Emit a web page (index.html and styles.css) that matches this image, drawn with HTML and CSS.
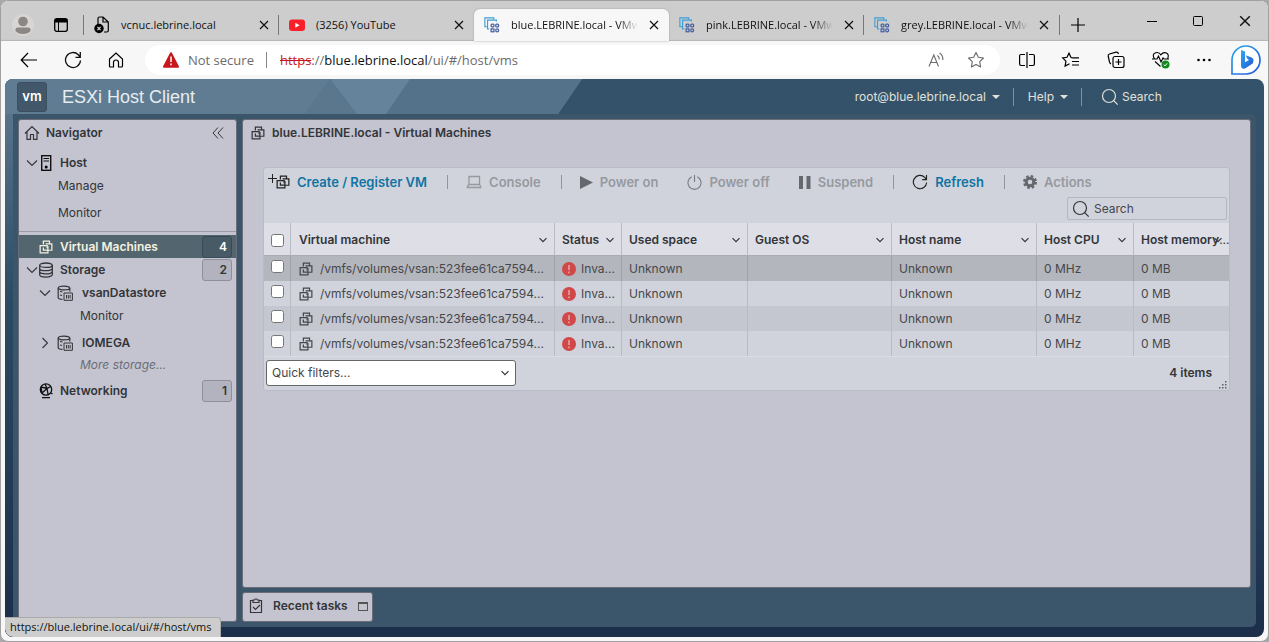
FILE: index.html
```html
<!DOCTYPE html>
<html lang="en">
<head>
<meta charset="utf-8">
<title>blue.LEBRINE.local - VMware ESXi</title>
<link rel="stylesheet" href="styles.css">
</head>
<body>
<svg class="sprite" aria-hidden="true">
  <symbol id="close" viewBox="0 0 10 10"><path d="M1 1l8 8M9 1l-8 8" fill="none" stroke="currentColor" stroke-width="1.2"/></symbol>
  <symbol id="site" viewBox="0 0 18 18"><g fill="none" stroke="#3d9fd8" stroke-width="1.3"><path d="M4 11H1V1h10v2"/><path d="M6 13.500H4V3.500h10V5"/></g><g fill="none" stroke="#4560a0" stroke-width="1.400"><rect x="8" y="8" width="3.200" height="3.200" rx="1"/><rect x="13.200" y="8" width="3.200" height="3.200" rx="1"/><rect x="8" y="13.400" width="3.200" height="3.200"/><rect x="13.200" y="13.400" width="3.200" height="3.200" rx="1.500"/></g></symbol>
  <symbol id="vm" viewBox="0 0 16 16"><g fill="none" stroke="currentColor" stroke-width="1.400"><path d="M5 5V1.300h7v3M7.500 4.300h7.200v7.400H10"/><path d="M4.500 6.300H1.300v8.400h8.900v-3M4.500 6.300h4.800v3"/><path d="M5 8.500v3h5.200V6.800"/></g></symbol>
  <symbol id="down" viewBox="0 0 12 12"><path d="M1 3.500l5 5 5-5" fill="none" stroke="currentColor" stroke-width="1.100"/></symbol>
  <symbol id="chevron" viewBox="0 0 8 8"><path d="M.5 2.200L4 5.700l3.500-3.500" fill="none" stroke="currentColor" stroke-width="1.200"/></symbol>
  <symbol id="right" viewBox="0 0 12 12"><path d="M3.500 1l5 5-5 5" fill="none" stroke="currentColor" stroke-width="1.100"/></symbol>
  <symbol id="store" viewBox="0 0 16 16"><g fill="none" stroke="currentColor" stroke-width="1.300"><ellipse cx="8" cy="3.200" rx="6.300" ry="2.200"/><path d="M1.700 3.200v9.600c0 3 12.600 3 12.600 0V3.200M1.700 6.400c0 3 12.600 3 12.600 0M1.700 9.600c0 3 12.600 3 12.600 0"/></g></symbol>
  <symbol id="datastore" viewBox="0 0 16 16"><g fill="none" stroke="currentColor" stroke-width="1.200"><ellipse cx="7" cy="3" rx="5.800" ry="1.900"/><path d="M1.200 3v9.400c0 1 2 1.800 4.300 2M12.800 3v3.500M3 6.500l2.500.5M3 10l2 .5"/><path d="M7 8h8.400v7.300H7zM9.500 10v3.500M11.300 10v3.500M13.100 10v3.500" stroke-width="1"/></g></symbol>
  <symbol id="search" viewBox="0 0 18 18"><g fill="none" stroke="currentColor" stroke-width="1.200"><circle cx="8" cy="8" r="6.500"/><path d="M12.700 12.700l4 4"/></g></symbol>
  <symbol id="house" viewBox="0 0 16 16"><path d="M1 8.500l7-7 7 7M3 7v7.400h3.500V9.500h3v4.900H13V7" fill="none" stroke="currentColor" stroke-width="1.200"/></symbol>
  <symbol id="reload" viewBox="0 0 18 18"><path d="M16.500 9.500A7.500 7.500 0 1 1 14.300 3.700L16.300 6M16.300 1v5.300H11.500" fill="none" stroke="currentColor" stroke-width="1.300"/></symbol>
  <symbol id="alert" viewBox="0 0 14 14"><circle cx="7" cy="7" r="7" fill="#d04848"/><path d="M7 3v5M7 9.500v1.800" stroke="#e0a9ad" stroke-width="1.500"/></symbol>
</svg>
<div class="window">
  <nav class="tabs" aria-label="Browser tabs">
    <button class="avatar" aria-label="Profile"><svg width="22" height="22" viewBox="0 0 22 22"><circle cx="11" cy="11" r="11" fill="#d8d5d2"/><circle cx="11" cy="7.500" r="4.800" fill="#8b8784"/><path d="M3.500 17v-1.500q0-2 2.500-2h10q2.500 0 2.500 2V17c-3 4-12 4-15 0z" fill="#8b8784"/></svg></button>
    <button class="spaces" aria-label="Tab actions"><svg width="14" height="14" viewBox="0 0 14 14"><rect x=".7" y=".7" width="12.600" height="12.600" rx="2" fill="none" stroke="#000" stroke-width="1.300"/><path d="M1 1h12v3.500H1z"/><path d="M4.500 4v9" stroke="#000"/></svg></button>
    <div class="tab"><svg width="16" height="18" viewBox="0 0 16 18"><path d="M4 8V2.500q0-1.500 1.500-1.500H9l5.300 5v8.500q0 1.500-1.500 1.500H10M9 1v5h5" fill="none" stroke="#000" stroke-width="1.200"/><circle cx="5" cy="12.500" r="4.700"/><path d="M3.400 10.900l3.200 3.200M6.600 10.900l-3.200 3.200" stroke="#ddd" stroke-width="1.200"/></svg><span>vcnuc.lebrine.local</span><button aria-label="Close tab"><svg width="10" height="10"><use href="#close"/></svg></button></div>
    <div class="tab"><svg width="16" height="18" viewBox="0 0 16 18"><rect y="3.500" width="16" height="11.500" rx="3" fill="#f8202a"/><path d="M6.300 6.700l4.300 2.500-4.300 2.500z" fill="#fff"/></svg><span>(3256) YouTube</span><button aria-label="Close tab"><svg width="10" height="10"><use href="#close"/></svg></button></div>
    <div class="tab active"><svg width="16" height="18"><use href="#site"/></svg><span class="fade">blue.LEBRINE.local - VMw</span><button aria-label="Close tab"><svg width="10" height="10"><use href="#close"/></svg></button></div>
    <div class="tab bare"><svg width="16" height="18"><use href="#site"/></svg><span class="fade">pink.LEBRINE.local - VMw</span><button aria-label="Close tab"><svg width="10" height="10"><use href="#close"/></svg></button></div>
    <div class="tab"><svg width="16" height="18"><use href="#site"/></svg><span class="fade">grey.LEBRINE.local - VMw</span><button aria-label="Close tab"><svg width="10" height="10"><use href="#close"/></svg></button></div>
    <button class="new-tab" aria-label="New tab"><svg width="14" height="14" viewBox="0 0 14 14"><path d="M7 0v14M0 7h14" stroke="#000" stroke-width="1.200"/></svg></button>
    <div class="window-buttons">
      <button aria-label="Minimize"><svg width="10" height="10"><path d="M0 5.500h10" stroke="#000"/></svg></button>
      <button aria-label="Maximize"><svg width="10" height="10"><rect x=".5" y=".5" width="9" height="9" rx="1" fill="none" stroke="#000"/></svg></button>
      <button aria-label="Close window"><svg width="12" height="12"><use href="#close"/></svg></button>
    </div>
  </nav>
  <div class="toolbar">
    <button aria-label="Back"><svg width="18" height="16" viewBox="0 0 18 16"><path d="M17 8H1.500M8 1L1.200 8 8 15" fill="none" stroke="#000" stroke-width="1.200"/></svg></button>
    <button aria-label="Reload"><svg width="18" height="18"><use href="#reload"/></svg></button>
    <button aria-label="Home"><svg width="16" height="16" viewBox="0 0 16 16"><path d="M1.500 7L8 1l6.500 6v7q0 1-1 1H10.500v-4.500a2.500 2.500 0 0 0-5 0V15H2.500q-1 0-1-1z" fill="none" stroke="#000" stroke-width="1.200"/></svg></button>
    <div class="address">
      <svg width="16" height="16" viewBox="0 0 16 16"><path d="M8 1.200L15 14.800H1z" fill="#c8171d" stroke="#c8171d" stroke-width="2" stroke-linejoin="round"/><path d="M8 4.500v5.500M8 11.500v1.800" stroke="#fff" stroke-width="1.500"/></svg>
      <span class="insecure">Not secure</span>
      <div class="url" role="textbox" aria-label="Address" contenteditable="true" spellcheck="false"><s>https</s>://<b>blue.lebrine.local</b>/ui/#/host/vms</div>
      <button aria-label="Read aloud"><svg width="16" height="16" viewBox="0 0 16 16"><g fill="none" stroke="#6b6b6b" stroke-width="1.100"><path d="M1 14.500L5.800 3l4.700 11.500M2.700 10.500h6.200M9.500 3.500q2 1.500 1.700 4M11.500 1q3.800 2.500 3.300 7"/></g></svg></button>
      <button aria-label="Favorite"><svg width="18" height="18" viewBox="0 0 18 18"><path d="M9 1.500l2.300 4.800 5.200.7-3.800 3.700.9 5.300L9 13.500 4.400 16l.9-5.300L1.500 7l5.200-.7z" fill="none" stroke="#666" stroke-width="1.100" stroke-linejoin="round"/></svg></button>
    </div>
    <div class="tools">
      <button aria-label="Split screen"><svg width="16" height="16" viewBox="0 0 16 16"><path d="M6 2.500H2q-1.400 0-1.400 1.400v8.200q0 1.400 1.400 1.400h4M10 2.500h4q1.400 0 1.400 1.400v8.200q0 1.400-1.400 1.400h-4M8 0v16" fill="none" stroke="#000" stroke-width="1.200"/></svg></button>
      <button aria-label="Favorites"><svg width="18" height="16" viewBox="0 0 18 16"><path d="M10.500 5.800L9 5.500 7 1.200 5 5.300l-4.300.6 3.200 3.200-.8 5L7.500 11.700M10.500 5.800h6.500M10 9.500h7M10 13h7" fill="none" stroke="#000" stroke-width="1.200"/></svg></button>
      <button aria-label="Collections"><svg width="18" height="18" viewBox="0 0 18 18"><rect x="6" y="5.500" width="11" height="11" rx="2" fill="none" stroke="#000" stroke-width="1.200"/><path d="M4 13q-1-.5-1.500-2L1.200 5q-.3-1.500 1.300-2L9 1.200q2-.3 2.500 1.800M11.500 8v6M8.500 11h6" fill="none" stroke="#000" stroke-width="1.200"/></svg></button>
      <button aria-label="Browser essentials"><svg width="18" height="18" viewBox="0 0 18 18"><path d="M2.500 8Q-.5 3 3.700 1.700 7 .8 8.800 3.800q2.400-3 5.600-1.900Q17.500 3.500 15.500 8M0 8h5l1.500-3 2.500 6 2-4 1 1h5M3 10.500L8.500 15.500" fill="none" stroke="#000" stroke-width="1.100"/><circle cx="13.500" cy="13.500" r="4" fill="#138a1e"/><path d="M11.700 13.600l1.300 1.300 2.200-2.600" fill="none" stroke="#fff"/></svg></button>
      <button aria-label="More"><svg width="14" height="4"><circle cx="1.500" cy="2" r="1.300"/><circle cx="7" cy="2" r="1.300"/><circle cx="12.500" cy="2" r="1.300"/></svg></button>
      <button class="bing" aria-label="Bing"><svg width="30" height="30" viewBox="0 0 30 30"><defs><linearGradient id="bb" x2="1" y2="1"><stop stop-color="#2ea8ee"/><stop offset="1" stop-color="#2558d6"/></linearGradient></defs><path d="M1 29V15A14 14 0 1 1 15 29z" fill="#fff" stroke="url(#bb)" stroke-width="1.700"/><path d="M10 5l4 1.500v10.800l4-2.300-1.700-1.200-1.600-3.500 6 2.300q3 1.800 1 5.800L14 23.500q-4 1-4-3z" fill="url(#bb)"/></svg></button>
    </div>
  </div>
  <div class="app">
    <header class="masthead">
      <svg class="facets" width="580" height="35" viewBox="0 0 580 35" aria-hidden="true"><path d="M0 0h577l-24 35H0z" fill="#5f7c93"/><path d="M325 0h252l-24 35H300z" fill="#54728a"/><path d="M325 0l-25 35h52z" fill="#5a778e"/><path d="M325 0h80l-24 35h-29z" fill="#65839a"/></svg>
      <span class="logo">vm</span>
      <h1>ESXi Host Client</h1>
      <div class="user-menu">
        <button>root@blue.lebrine.local <i class="caret"></i></button>
        <button>Help <i class="caret"></i></button>
        <label class="global-search"><svg width="18" height="18"><use href="#search"/></svg><input type="text" placeholder="Search" aria-label="Search everything"></label>
      </div>
    </header>
    <div class="workspace">
      <nav class="navigator" aria-label="Navigator">
        <div class="panel-title"><svg width="16" height="16"><use href="#house"/></svg><span>Navigator</span><button aria-label="Collapse"><svg width="12" height="12" viewBox="0 0 12 12"><path d="M6 .5L1 6l5 5.500M11 .5L6 6l5 5.500" fill="none" stroke="currentColor"/></svg></button></div>
        <ul class="tree host">
          <li><svg class="twist" width="12" height="12"><use href="#down"/></svg><svg class="glyph" width="16" height="16" viewBox="0 0 16 16"><rect x="3.700" y=".7" width="9" height="14.600" fill="none" stroke="#111" stroke-width="1.400"/><path d="M5.500 3.500h5.500M5.500 6h5.500" stroke="#111"/><circle cx="8.200" cy="12" r="1.500"/></svg><a href="#host">Host</a></li>
          <li class="leaf"><a href="#manage">Manage</a></li>
          <li class="leaf gap"><a href="#monitor">Monitor</a></li>
        </ul>
        <ul class="tree inventory">
          <li class="selected"><span class="twist"></span><svg class="glyph" width="14" height="14"><use href="#vm"/></svg><a href="#vms">Virtual Machines</a><span class="count">4</span></li>
          <li><svg class="twist" width="12" height="12"><use href="#down"/></svg><svg class="glyph" width="16" height="16"><use href="#store"/></svg><a href="#storage">Storage</a><span class="count">2</span></li>
          <li class="nested"><svg class="twist" width="12" height="12"><use href="#down"/></svg><svg class="glyph" width="16" height="16"><use href="#datastore"/></svg><a href="#vsan">vsanDatastore</a></li>
          <li class="leaf deep"><a href="#vsan-monitor">Monitor</a></li>
          <li class="nested gap"><svg class="twist" width="12" height="12"><use href="#right"/></svg><svg class="glyph" width="16" height="16"><use href="#datastore"/></svg><a href="#iomega">IOMEGA</a></li>
          <li class="leaf deep more"><a href="#more">More storage...</a></li>
          <li class="gap"><span class="twist"></span><svg class="glyph" width="16" height="16" viewBox="0 0 16 16"><g fill="none" stroke="#111" stroke-width="1.300"><circle cx="8" cy="6.500" r="5.700"/><path d="M3 4l6 1.500 3.500-2M4 10l5-4.500 1 5.500M3 4l1 6M9 5.500L7 1M4 14.700h8M13 10l1.500 1"/></g></svg><a href="#networking">Networking</a><span class="count">1</span></li>
        </ul>
      </nav>
      <main class="main-column">
        <section class="panel">
          <h2><svg width="14" height="14"><use href="#vm"/></svg>blue.LEBRINE.local - Virtual Machines</h2>
          <div class="grid-box">
            <div class="actions">
              <button class="live"><svg width="22" height="16" viewBox="0 0 22 16"><path d="M0 4.500h9M4.500 0v9" stroke="#222"/><g transform="translate(8 1)" color="#222"><use href="#vm" width="14" height="14"/></g></svg>Create / Register VM</button>
              <button class="split" disabled><svg width="16" height="14" viewBox="0 0 16 14"><path d="M3 1.500h10.500v8H3zM.7 12.500h14.600M3 9.500L1 12M13.500 9.500l1.500 2.500" fill="none" stroke="currentColor" stroke-width="1.300"/></svg>Console</button>
              <button class="split" disabled><svg width="13" height="13" viewBox="0 0 13 13"><path d="M0 0l13 6.500L0 13z" fill="#66686e"/></svg>Power on</button>
              <button disabled><svg width="15" height="15" viewBox="0 0 15 15"><path d="M4.700 1.800a6.600 6.600 0 1 0 5.600 0M7.500 0v7" fill="none" stroke="#777980" stroke-width="1.100"/></svg>Power off</button>
              <button disabled><svg width="12" height="13" viewBox="0 0 12 13"><path d="M0 0h4v13H0zM7.500 0h4v13h-4z" fill="#66686e"/></svg>Suspend</button>
              <button class="live split"><svg width="16" height="16" color="#222"><use href="#reload"/></svg>Refresh</button>
              <button class="split" disabled><svg width="14" height="14" viewBox="0 0 14 14"><circle cx="7" cy="7" r="3.800" fill="none" stroke="#66686e" stroke-width="3"/><circle cx="7" cy="7" r="5.900" fill="none" stroke="#66686e" stroke-width="2.200" stroke-dasharray="2.600 2.034"/></svg>Actions</button>
            </div>
            <div class="filter-row"><label><svg width="18" height="18"><use href="#search"/></svg><input type="text" placeholder="Search" aria-label="Search virtual machines"></label></div>
            <table>
              <colgroup><col class="c-check"><col><col class="c-status"><col class="c-space"><col class="c-os"><col class="c-host"><col class="c-cpu"><col class="c-memory"></colgroup>
              <thead><tr>
                <th><input type="checkbox" aria-label="Select all"></th>
                <th>Virtual machine<svg width="8" height="8"><use href="#chevron"/></svg></th>
                <th>Status<svg width="8" height="8"><use href="#chevron"/></svg></th>
                <th>Used space<svg width="8" height="8"><use href="#chevron"/></svg></th>
                <th>Guest OS<svg width="8" height="8"><use href="#chevron"/></svg></th>
                <th>Host name<svg width="8" height="8"><use href="#chevron"/></svg></th>
                <th>Host CPU<svg width="8" height="8"><use href="#chevron"/></svg></th>
                <th class="tight">Host memory<span>...</span><svg width="8" height="8"><use href="#chevron"/></svg></th>
              </tr></thead>
              <tbody>
                <tr><td><input type="checkbox" aria-label="Select row 1"></td><td><div class="name"><svg width="14" height="14"><use href="#vm"/></svg><span>/vmfs/volumes/vsan:523fee61ca7594...</span></div></td><td><div class="state"><svg width="14" height="14"><use href="#alert"/></svg>Inva...</div></td><td>Unknown</td><td></td><td>Unknown</td><td>0 MHz</td><td>0 MB</td></tr>
                <tr><td><input type="checkbox" aria-label="Select row 2"></td><td><div class="name"><svg width="14" height="14"><use href="#vm"/></svg><span>/vmfs/volumes/vsan:523fee61ca7594...</span></div></td><td><div class="state"><svg width="14" height="14"><use href="#alert"/></svg>Inva...</div></td><td>Unknown</td><td></td><td>Unknown</td><td>0 MHz</td><td>0 MB</td></tr>
                <tr><td><input type="checkbox" aria-label="Select row 3"></td><td><div class="name"><svg width="14" height="14"><use href="#vm"/></svg><span>/vmfs/volumes/vsan:523fee61ca7594...</span></div></td><td><div class="state"><svg width="14" height="14"><use href="#alert"/></svg>Inva...</div></td><td>Unknown</td><td></td><td>Unknown</td><td>0 MHz</td><td>0 MB</td></tr>
                <tr><td><input type="checkbox" aria-label="Select row 4"></td><td><div class="name"><svg width="14" height="14"><use href="#vm"/></svg><span>/vmfs/volumes/vsan:523fee61ca7594...</span></div></td><td><div class="state"><svg width="14" height="14"><use href="#alert"/></svg>Inva...</div></td><td>Unknown</td><td></td><td>Unknown</td><td>0 MHz</td><td>0 MB</td></tr>
              </tbody>
            </table>
            <div class="grid-footer">
              <div class="quick"><select aria-label="Quick filters"><option>Quick filters...</option></select><svg width="8" height="8"><use href="#chevron"/></svg></div>
              <span class="total">4 items</span>
              <svg class="grip" width="8" height="8" viewBox="0 0 8 8"><path d="M6 0h1.500v1.500H6zM6 3h1.500v1.500H6zM3 3h1.500v1.500H3zM0 6h1.500v1.500H0zM3 6h1.500v1.500H3zM6 6h1.500v1.500H6z" fill="#5c5e66"/></svg>
            </div>
          </div>
        </section>
        <section class="tasks"><svg width="14" height="16" viewBox="0 0 14 16"><path d="M4 2.500H1.500v12h11v-12H10M4 4.500V2h1.500q1.500-2.500 3 0H10v2.500zM4 9l2.500 2.500L11 7" fill="none" stroke="currentColor" stroke-width="1.200"/></svg><span>Recent tasks</span><button aria-label="Expand"><svg width="10" height="10"><rect x=".5" y="1.500" width="9" height="8" fill="none" stroke="#555"/><path d="M0 2.500h10" stroke="#555"/></svg></button></section>
      </main>
    </div>
    <div class="link-hint">https://blue.lebrine.local/ui/#/host/vms</div>
  </div>
</div>
</body>
</html>
```
FILE: styles.css
```css
* { box-sizing: border-box; }
html { background: #a9a9a9; }
body { margin: 0; font: 12px/16px "Open Sans", "Liberation Sans", sans-serif; color: #111; }
svg { display: block; flex: none; overflow: visible; }
button { display: flex; align-items: center; justify-content: center; margin: 0; padding: 0; border: 0; background: none; font: inherit; color: inherit; white-space: nowrap; }
input { font: inherit; color: inherit; }
a { color: inherit; text-decoration: none; }
.sprite { position: absolute; width: 0; height: 0; }

.window { display: flex; flex-direction: column; min-height: 100vh; border: 1px solid #a0a0a0; border-radius: 8px; overflow: hidden; background: #f7f7f7; }

/* browser tabs */
.tabs { display: flex; height: 40px; padding: 8px 0 0 11px; background: #cdcdcd; box-shadow: inset 0 -2px 1px -1px #b5b5b5; font-size: 11px; }
.avatar { width: 22px; margin-right: 20px; }
.spaces { width: 14px; margin-right: 16px; }
.tab { display: flex; align-items: center; flex: 0 1 195px; min-width: 0; height: 32px; padding: 0 10px; gap: 11px; }
.tab::before { content: ""; flex: none; width: 1px; height: 20px; margin: 0 -1px 0 -11px; background: #777; }
.tab span { flex: 1; overflow: hidden; white-space: nowrap; }
.tab .fade { overflow: visible; min-width: 0; mask-image: linear-gradient(90deg, #000 84%, transparent); }
.tab button { width: 10px; height: 20px; }
.tab.active { background: #f7f7f7; border-radius: 6px 6px 0 0; box-shadow: 0 0 2px #999; }
.tab.active::before, .tab.bare::before { background: none; }
.new-tab { padding: 0 11px; border-left: 1px solid #777; height: 20px; margin-top: 6px; }
.window-buttons { display: flex; align-items: center; height: 24px; gap: 36px; margin-left: auto; padding-right: 17px; }

/* browser toolbar */
.toolbar { display: flex; align-items: center; height: 38px; padding: 0 7px 0 19px; gap: 26px; }
.address { display: flex; align-items: center; flex: 1; height: 30px; margin-left: -5px; padding: 0 15px 0 18px; gap: 9px; border-radius: 15px; background: #fff; font-size: 13px; color: #6b6b6b; }
.insecure { padding-right: 12px; border-right: 1px solid #888; white-space: nowrap; }
.url { flex: 1; margin-left: 4px; white-space: nowrap; outline: 0; }
.url s { color: #c8171d; }
.url b { color: #111; font-weight: 400; }
.address button + button { margin-left: 14px; }
.tools { display: flex; align-items: center; gap: 27px; margin-left: -7px; }
.tools .bing { margin-left: -7px; }

/* host client */
.app { position: relative; display: flex; flex-direction: column; flex: 1; margin: 0 4px 4px; border-radius: 8px; overflow: hidden; background: linear-gradient(#34536a, #2c4a63 55%, #1b2e4a); font-family: Inter, "Open Sans", sans-serif; color: #333538; }
.app::before { content: ""; position: absolute; left: 0; top: 0; bottom: 0; width: 8px; background: linear-gradient(#5f7c93, #2c4a63 40%, #1b2e4a); }
.masthead { position: relative; display: flex; align-items: center; height: 35px; padding: 0 100px 0 12px; color: #e6ecf0; }
.facets { position: absolute; left: 0; top: 0; }
.logo { position: relative; width: 30px; height: 30px; border-radius: 3px; background: #42586a; border: 1px solid #3a5061; font: 600 13px/27px Inter, sans-serif; text-align: center; color: #fff; }
h1 { position: relative; margin: 0 auto 0 15px; font: 400 18px/24px "Liberation Sans", Arial, sans-serif; white-space: nowrap; }
.user-menu { display: flex; align-items: center; color: #e3e0d8; }
.user-menu button { height: 18px; padding-right: 13px; margin-right: 14px; border-right: 1px solid #7d93a2; gap: 6px; }
.caret { border: 4px solid transparent; border-top-color: currentColor; border-bottom: 0; }
.global-search { display: flex; align-items: center; gap: 3px; margin-left: 5px; }
.global-search input { width: 42px; padding: 0; border: 0; background: none; }
.global-search input::placeholder { color: inherit; opacity: 1; }
.workspace { display: flex; flex: 1; margin: 0 8px 10px; padding: 5px; gap: 5px; border-radius: 5px; background: #3b566a; position: relative; }
.navigator, .panel, .tasks { border: 1px solid #6a6d78; border-radius: 3px; background: #c3c4d0; }
.navigator { flex: 0 0 219px; }
.panel-title { display: flex; align-items: center; height: 25px; padding: 0 12px 0 5px; gap: 6px; font-weight: 600; }
.panel-title button { margin-left: auto; }
.tree { margin: 0; padding: 0; list-style: none; }
.tree.host { padding: 6px 0 7px; border-bottom: 1px solid #9a9ba6; }
.tree.inventory { padding-top: 3px; }
.tree li { display: flex; align-items: center; height: 23px; padding: 0 4px 0 7px; font-weight: 600; }
.tree li.leaf { padding-left: 39px; font-weight: 400; }
.tree li.gap { margin-top: 4px; }
.tree li.nested { height: 24px; padding-left: 20px; }
.tree li.deep { height: 22px; padding-left: 61px; }
.tree li.more { height: 20px; font-style: italic; color: #6c6d75; }
.tree .twist { width: 12px; height: 12px; flex: none; }
.tree .glyph { margin: 0 6px 0 0; }
.tree .selected .glyph { margin: 0 7px 0 1px; }
.tree .nested .glyph { margin: 0 9px 0 6px; }
.tree .selected { background: #53666f; color: #f4f1e0; }
.count { width: 30px; height: 22px; margin-left: auto; padding-right: 4px; border: 1px solid #8e8f99; border-radius: 3px; background: #b2b3be; line-height: 20px; text-align: right; }
.selected .count { background: #475a66; border-color: #374a56; color: #fff; }

.main-column { display: flex; flex-direction: column; flex: 1; min-width: 0; gap: 4px; }
.panel { flex: 1; padding: 0 20px 20px; }
h2 { display: flex; align-items: center; gap: 7px; height: 25px; margin: 0 0 22px -12px; font-size: 12px; font-weight: 600; }
.grid-box { border: 1px solid #b9bbc6; border-radius: 3px; background: #d0d3dc; }
.actions { display: flex; align-items: center; height: 28px; padding: 0 4px; font-size: 13px; font-weight: 600; color: #96999f; }
.actions button { gap: 7px; margin-right: 29px; color: inherit; }
.actions .live { color: #0f74a3; }
.actions .split::before { content: ""; width: 1px; height: 14px; margin: 0 11px 0 -9px; background: #92959c; }
.filter-row { display: flex; justify-content: flex-end; height: 27px; padding: 1px 2px 3px; }
.filter-row label { display: flex; align-items: center; width: 160px; height: 23px; padding: 0 4px; gap: 4px; border: 1px solid #b4b7c2; border-radius: 2px; }
.filter-row input { flex: 1; min-width: 0; padding: 0; border: 0; background: none; }
.filter-row input::placeholder { color: #45474c; opacity: 1; }
table { width: 100%; table-layout: fixed; border-collapse: separate; border-spacing: 0; }
.c-check { width: 27px; }
.c-status { width: 67px; }
.c-space { width: 126px; }
.c-os { width: 144px; }
.c-host { width: 145px; }
.c-cpu { width: 97px; }
.c-memory { width: 95px; }
th, td { padding: 0 0 0 7px; border-right: 1px solid #b9bbc5; text-align: left; white-space: nowrap; overflow: hidden; }
th:last-child, td:last-child { border-right: 0; }
th:nth-child(2), td:nth-child(2) { padding-left: 8px; }
th { position: relative; height: 33px; padding-top: 2px; background: #dddee6; border-bottom: 1px solid #aaabb2; font-weight: 600; }
th svg { position: absolute; right: 7px; top: 13px; }
th.tight span { font-weight: 400; }
td { height: 25px; }
tbody tr { background: #d0d3dc; color: #45474b; }
tbody tr:nth-child(odd) { background: #c4c6d0; }
tbody tr:first-child { background: #b4b6bd; }
tbody tr:first-child td { border-right-color: #a0a2aa; }
input[type="checkbox"] { display: block; width: 13px; height: 13px; margin: 0; }
tbody input[type="checkbox"] { margin-bottom: 4px; }
.name, .state { display: flex; align-items: center; gap: 7px; }
.name span { overflow: hidden; }
.state { gap: 5px; }
.grid-footer { position: relative; display: flex; align-items: center; justify-content: space-between; height: 34px; padding: 0 17px 1px 2px; border-top: 1px solid #dcdee5; }
.quick { position: relative; width: 250px; }
.quick select { appearance: none; display: block; width: 100%; height: 26px; padding: 0 5px; border: 1px solid #666; border-radius: 3px; background: #fff; font: inherit; color: #45474b; }
.quick svg { position: absolute; right: 7px; top: 9px; pointer-events: none; }
.total { font-weight: 600; }
.grip { position: absolute; right: 2px; bottom: 1px; }
.tasks { display: flex; align-items: center; align-self: flex-start; height: 30px; padding: 0 4px 2px 6px; gap: 10px; font-weight: 600; }
.link-hint { position: absolute; left: 0; bottom: 0; padding: 1px 9px 2px 5px; border: solid #aaa; border-width: 1px 1px 0 0; border-radius: 0 3px 0 8px; background: #cdcdcd; font-family: "Open Sans", sans-serif; font-size: 11px; color: #111; }
```
